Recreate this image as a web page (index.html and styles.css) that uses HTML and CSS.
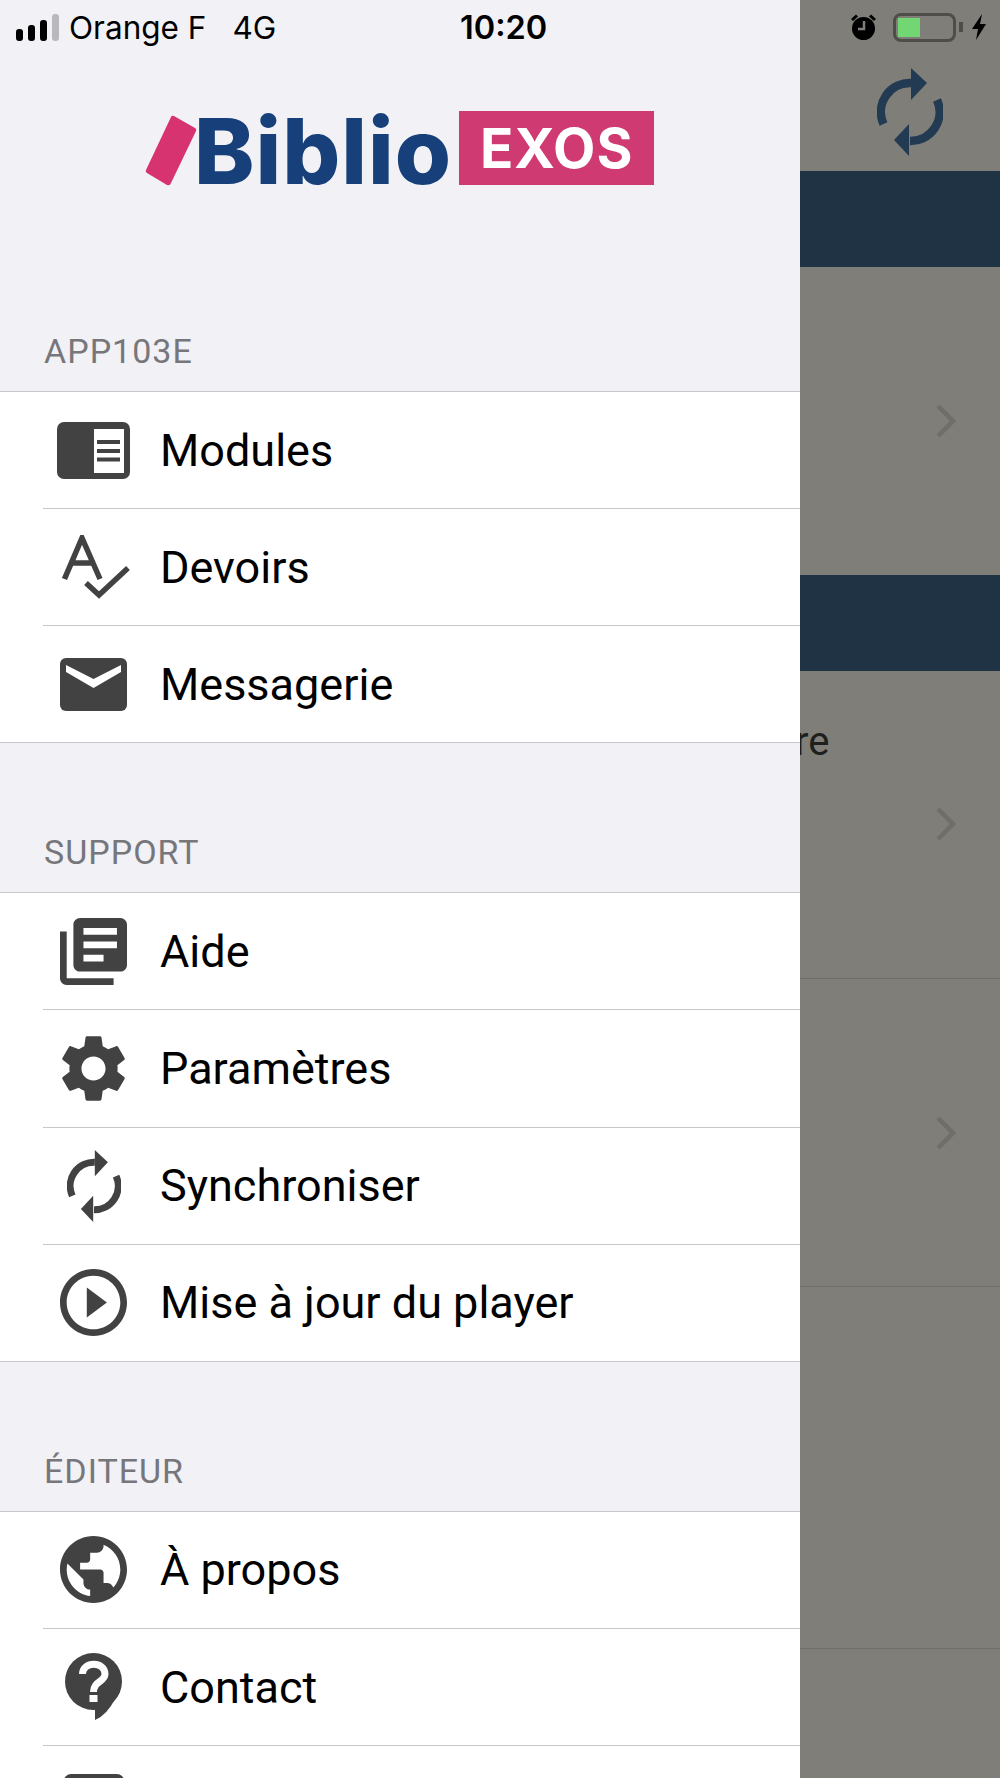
FILE: index.html
```html
<!DOCTYPE html>
<html lang="fr">
<head>
    <meta charset="UTF-8">
    <meta name="viewport" content="width=device-width, initial-scale=1.0">
    <title>BiblioExos</title>
    <link rel="stylesheet" href="styles.css">
</head>
<body>
    <svg class="defs" width="0" height="0">
        <symbol id="sync" viewBox="0 0 66 90">
            <path d="M6.500 57A29 29 0 0 1 34 16" fill="none" stroke="currentColor" stroke-width="8.500"/>
            <path d="M60 33A29 29 0 0 1 33 74" fill="none" stroke="currentColor" stroke-width="8.500"/>
            <path d="M34 1L50 16L34 33Z" fill="currentColor"/>
            <path d="M32 57L17 73L32 89Z" fill="currentColor"/>
        </symbol>
        <symbol id="chevron" viewBox="0 0 20 34">
            <path d="M2 2L17 17L2 32" fill="none" stroke="currentColor" stroke-width="4.5"/>
        </symbol>
    </svg>

    <div class="status-bar">
        <div class="status-left">
            <div class="signal">
                <span class="bar bar-1"></span>
                <span class="bar bar-2"></span>
                <span class="bar bar-3"></span>
                <span class="bar bar-4"></span>
            </div>
            <span class="carrier">Orange F</span>
            <span class="network">4G</span>
        </div>
        <span class="time">10:20</span>
        <div class="status-right">
            <svg class="alarm" width="25" height="26" viewBox="0 0 25 26">
                <circle cx="12.5" cy="14.5" r="11.5" fill="#000"/>
                <path d="M1 6L6 1.5M24 6L19 1.5" stroke="#000" stroke-width="3"/>
                <path d="M13 7V15H7" fill="none" stroke="#7f7e79" stroke-width="2.5"/>
            </svg>
            <div class="battery"><div class="battery-level"></div></div>
            <div class="battery-nub"></div>
            <svg class="bolt" width="14" height="26" viewBox="0 0 14 26">
                <path d="M10 0L0 15H6L4 26L14 10H8Z" fill="#000"/>
            </svg>
        </div>
    </div>

    <div class="screen">
        <div class="drawer">
            <div class="logo">
                <svg class="logo-mark" width="52" height="71" viewBox="0 0 52 71">
                    <path d="M26 2Q27 0 29 1L50 13Q52 14 51 16L26 68Q25 71 22 70L2 58Q0 57 1 55Z" fill="#d63370"/>
                </svg>
                <span class="logo-name">Biblio</span>
                <span class="logo-tag">EXOS</span>
            </div>

            <div class="section-title">APP103E</div>
            <div class="list">
                <div class="row">
                    <div class="row-icon">
                        <svg width="73" height="57" viewBox="0 0 73 57">
                            <rect width="73" height="57" rx="7" fill="#424242"/>
                            <rect x="37" y="7" width="30" height="44" fill="#fff"/>
                            <path d="M40 20H63M40 29H63M40 37.500H63" stroke="#424242" stroke-width="4"/>
                        </svg>
                    </div>
                    <span class="row-label">Modules</span>
                </div>
                <div class="row">
                    <div class="row-icon icon-shift">
                        <svg width="68" height="64" viewBox="0 0 68 64">
                            <path d="M2.500 44L20 3L38 44M8 28H33" fill="none" stroke="#424242" stroke-width="5.500"/>
                            <path d="M24 48L37 60L66 33" fill="none" stroke="#424242" stroke-width="5.500"/>
                        </svg>
                    </div>
                    <span class="row-label">Devoirs</span>
                </div>
                <div class="row">
                    <div class="row-icon">
                        <svg width="67" height="53" viewBox="0 0 67 53">
                            <rect width="67" height="53" rx="6" fill="#424242"/>
                            <path d="M6 7L33.500 21L61 7V14L33.500 30L6 14Z" fill="#fff"/>
                        </svg>
                    </div>
                    <span class="row-label">Messagerie</span>
                </div>
            </div>

            <div class="section-title">SUPPORT</div>
            <div class="list">
                <div class="row">
                    <div class="row-icon">
                        <svg width="67" height="67" viewBox="2 2 20 20" fill="#424242">
                            <path d="M4 6H2v14c0 1.100.9 2 2 2h14v-2H4V6zm16-4H8c-1.100 0-2 .9-2 2v12c0 1.100.9 2 2 2h12c1.100 0 2-.9 2-2V4c0-1.100-.9-2-2-2zm-1 9H9V9h10v2zm-4 4H9v-2h6v2zm4-8H9V5h10v2z"/>
                        </svg>
                    </div>
                    <span class="row-label">Aide</span>
                </div>
                <div class="row">
                    <div class="row-icon">
                        <svg width="67" height="67" viewBox="2.500 2 19 20" fill="#424242">
                            <path d="M19.140 12.940c.04-.3.06-.61.06-.94 0-.32-.02-.64-.07-.94l2.030-1.580c.18-.14.23-.41.12-.61l-1.920-3.320c-.12-.22-.37-.29-.59-.22l-2.390.96c-.5-.38-1.030-.7-1.620-.94l-.36-2.540c-.04-.24-.24-.41-.48-.41h-3.840c-.24 0-.43.17-.47.41l-.36 2.540c-.59.24-1.130.57-1.620.94l-2.390-.96c-.22-.08-.47 0-.59.22L2.740 8.870c-.12.21-.08.47.12.61l2.030 1.580c-.05.3-.09.63-.09.94s.02.64.07.94l-2.030 1.580c-.18.14-.23.41-.12.61l1.920 3.320c.12.22.37.29.59.22l2.390-.96c.5.38 1.030.7 1.620.94l.36 2.540c.05.24.24.41.48.41h3.840c.24 0 .44-.17.47-.41l.36-2.540c.59-.24 1.130-.56 1.620-.94l2.390.96c.22.08.47 0 .59-.22l1.920-3.320c.12-.22.07-.47-.12-.61l-2.010-1.580zM12 15.600c-1.980 0-3.600-1.620-3.600-3.600s1.620-3.600 3.600-3.600 3.600 1.620 3.600 3.600-1.620 3.600-3.600 3.600z"/>
                        </svg>
                    </div>
                    <span class="row-label">Paramètres</span>
                </div>
                <div class="row">
                    <div class="row-icon icon-sync">
                        <svg width="54" height="74"><use href="#sync"/></svg>
                    </div>
                    <span class="row-label">Synchroniser</span>
                </div>
                <div class="row">
                    <div class="row-icon">
                        <svg width="67" height="67" viewBox="2 2 20 20" fill="#424242">
                            <path d="M10 16.500l6-4.500-6-4.500v9zM12 2C6.480 2 2 6.480 2 12s4.480 10 10 10 10-4.480 10-10S17.520 2 12 2zm0 18c-4.410 0-8-3.590-8-8s3.590-8 8-8 8 3.590 8 8-3.590 8-8 8z"/>
                        </svg>
                    </div>
                    <span class="row-label">Mise à jour du player</span>
                </div>
            </div>

            <div class="section-title">ÉDITEUR</div>
            <div class="list">
                <div class="row">
                    <div class="row-icon">
                        <svg width="67" height="67" viewBox="2 2 20 20" fill="#424242">
                            <path d="M12 2C6.480 2 2 6.480 2 12s4.480 10 10 10 10-4.480 10-10S17.520 2 12 2zm-1 17.930c-3.950-.49-7-3.850-7-7.930 0-.62.08-1.210.21-1.790L9 15v1c0 1.100.9 2 2 2v1.930zm6.900-2.540c-.26-.81-1-1.390-1.900-1.390h-1v-3c0-.55-.45-1-1-1H8v-2h2c.55 0 1-.45 1-1V7h2c1.100 0 2-.9 2-2v-.41c2.930 1.190 5 4.060 5 7.410 0 2.080-.8 3.970-2.100 5.390z"/>
                        </svg>
                    </div>
                    <span class="row-label">À propos</span>
                </div>
                <div class="row">
                    <div class="row-icon">
                        <svg width="57" height="68" viewBox="0 0 57 68">
                            <circle cx="28.500" cy="28.500" r="28.500" fill="#424242"/>
                            <path d="M30 52V67Q42 62 50 46Z" fill="#424242"/>
                            <path d="M17.500 21C17.500 8 40 8 40 21C40 29 28.500 28 28.500 39" fill="none" stroke="#fff" stroke-width="7"/>
                            <rect x="24.500" y="42" width="8" height="7" fill="#fff"/>
                        </svg>
                    </div>
                    <span class="row-label">Contact</span>
                </div>
                <div class="row">
                    <div class="row-icon">
                        <svg width="60" height="60" viewBox="0 0 60 60">
                            <rect width="60" height="60" rx="7" fill="#424242"/>
                        </svg>
                    </div>
                </div>
            </div>
        </div>

        <div class="back">
            <div class="back-head">
                <svg class="back-sync" width="66" height="90"><use href="#sync"/></svg>
            </div>
            <div class="back-band"></div>
            <div class="back-row back-row-first">
                <svg class="chevron" width="20" height="34"><use href="#chevron"/></svg>
            </div>
            <div class="back-band"></div>
            <div class="back-row back-row-text">
                <div class="back-title">re</div>
                <svg class="chevron" width="20" height="34"><use href="#chevron"/></svg>
            </div>
            <div class="back-row back-row-line">
                <svg class="chevron" width="20" height="34"><use href="#chevron"/></svg>
            </div>
            <div class="back-row back-row-empty"></div>
        </div>
    </div>
</body>
</html>
```

FILE: styles.css
```css
html, body {
    margin: 0;
    height: 1778px;
    overflow: hidden;
}

body {
    position: relative;
    font-family: 'Roboto', 'Liberation Sans', sans-serif;
    color: #000;
}

.defs {
    display: block;
    height: 0;
}

.status-bar {
    position: absolute;
    top: 0;
    left: 0;
    width: 1000px;
    height: 54px;
    display: flex;
    align-items: center;
    font-family: 'Inter', 'Liberation Sans', sans-serif;
}

.status-left {
    width: 460px;
    display: flex;
    align-items: center;
    padding-left: 16px;
    box-sizing: border-box;
    font-size: 31.5px;
}

.signal {
    display: flex;
    align-items: flex-end;
    gap: 5px;
    height: 27px;
    margin-right: 10px;
}

.bar {
    width: 7px;
    background: #000;
    border-radius: 3px;
}

.bar-1 { height: 12px; }
.bar-2 { height: 16px; }
.bar-3 { height: 21px; }
.bar-4 { height: 27px; background: #b9b9bd; }

.network {
    margin-left: 26px;
}

.time {
    font-size: 32.5px;
    font-weight: 600;
}

.status-right {
    margin-left: auto;
    display: flex;
    align-items: center;
    padding-right: 14px;
}

.alarm {
    margin-right: 17px;
}

.battery {
    width: 63px;
    height: 29px;
    box-sizing: border-box;
    border: 3px solid #4e4d4a;
    border-radius: 8px;
    padding: 2px;
}

.battery-level {
    width: 22px;
    height: 100%;
    background: #72d672;
}

.battery-nub {
    width: 4px;
    height: 10px;
    margin-left: 3px;
    margin-right: 9px;
    background: #4e4d4a;
}

.screen {
    display: flex;
    height: 1778px;
}

.drawer {
    width: 800px;
    flex: none;
    background: #f1f1f6;
}

.logo {
    height: 242px;
    box-sizing: border-box;
    padding: 111px 0 0 145px;
    display: flex;
    align-items: flex-start;
}

.logo-mark {
    margin-top: 4px;
    margin-right: -3px;
}

.logo-name {
    margin-top: 4px;
    font-family: 'Inter', 'Liberation Sans', sans-serif;
    font-size: 91px;
    font-weight: 800;
    line-height: 73px;
    letter-spacing: 1px;
    color: #17407a;
}

.logo-tag {
    margin-left: 7px;
    width: 195px;
    height: 74px;
    background: #cf3a72;
    color: #fff;
    font-family: 'Inter', 'Liberation Sans', sans-serif;
    font-size: 55px;
    font-weight: 700;
    line-height: 74px;
    letter-spacing: 1px;
    text-align: center;
}

.section-title {
    height: 149px;
    box-sizing: border-box;
    padding: 0 0 18px 44px;
    display: flex;
    align-items: flex-end;
    font-size: 34px;
    line-height: 44px;
    letter-spacing: 1px;
    color: #76767b;
}

.list {
    background: #fff;
    border-top: 1px solid #c8c7cc;
    border-bottom: 1px solid #c8c7cc;
}

.row {
    margin-left: 43px;
    height: 117.2px;
    box-sizing: border-box;
    border-top: 1px solid #c8c7cc;
    display: flex;
    align-items: center;
}

.row:first-child {
    height: 116px;
    border-top: 0;
}

.row-icon {
    width: 101px;
    margin-right: 16px;
    display: flex;
    justify-content: center;
    flex: none;
}

.icon-shift {
    padding-left: 5px;
    width: 96px;
}

.icon-sync {
    color: #424242;
}

.row-label {
    font-size: 45px;
}

.back {
    flex: 1;
    overflow: hidden;
    background: #7f7e79;
    color: #1f1f1c;
}

.back-head {
    height: 171px;
    box-sizing: border-box;
    padding: 67px 0 0 77px;
}

.back-sync {
    display: block;
    color: #223a52;
}

.back-band {
    height: 96px;
    background: #203345;
}

.back-row {
    display: flex;
    flex-direction: column;
    align-items: flex-end;
    justify-content: center;
    padding-right: 44px;
    box-sizing: border-box;
}

.back-row-first {
    height: 308px;
}

.back-row-text {
    height: 308px;
    justify-content: flex-start;
    padding-top: 46px;
    border-bottom: 1px solid #6f6e69;
}

.back-title {
    align-self: flex-start;
    margin-left: -5px;
    margin-bottom: 40px;
    font-size: 40px;
    line-height: 50px;
}

.back-row-line {
    height: 308px;
    border-bottom: 1px solid #6f6e69;
}

.back-row-empty {
    height: 362px;
    border-bottom: 1px solid #6f6e69;
}

.chevron {
    color: #6f6e6a;
}
```
